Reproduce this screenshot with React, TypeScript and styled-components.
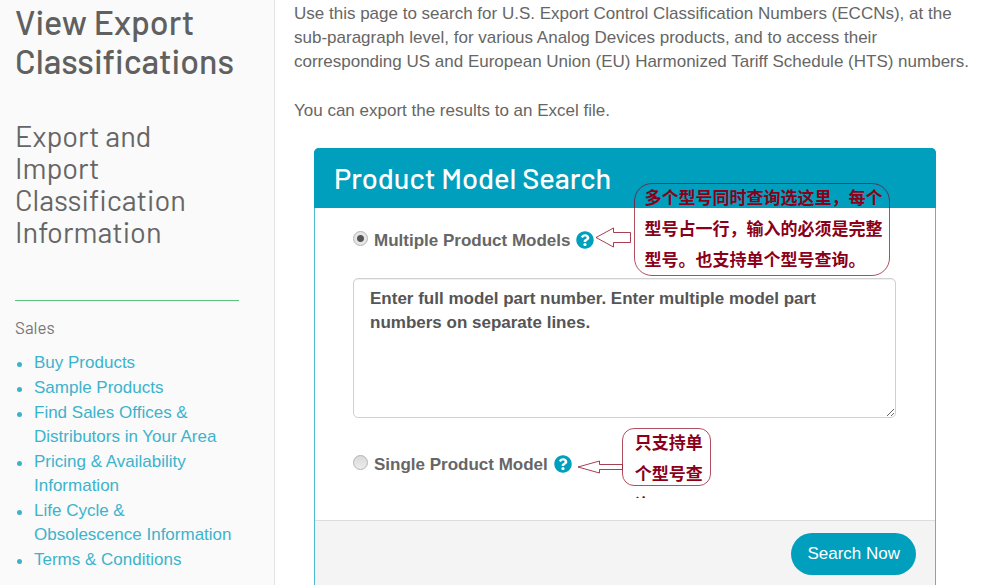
import React, { useState } from "react";
import styled, { createGlobalStyle, css } from "styled-components";
import { FaQuestionCircle } from "react-icons/fa";

const teal = "#009fbd";
const maroon = "#8b0018";
const sans = `"Liberation Sans", Arial, sans-serif`;
const display = `Barlow, Roboto, sans-serif`;

const GlobalStyle = createGlobalStyle`
  *, *::before, *::after { box-sizing: border-box; }
  body {
    margin: 0;
    background: #fff;
    color: #666;
    font: 17px/24px ${sans};
  }
`;

const Page = styled.div`
  display: flex;
  min-height: 100vh;
`;

const Sidebar = styled.aside`
  flex: none;
  width: 275px;
  padding: 2px 35px 12px 15px;
  background: #fafafa;
  border-right: 1px solid #e4e4e4;
`;

const Title = styled.h1`
  margin: 0;
  font: 500 34px/39px ${display};
  color: #606060;
`;

const Subtitle = styled.h2`
  margin: 40px 20px 0 0;
  font: 400 29px/32px ${display};
`;

const SalesNav = styled.nav`
  margin-top: 52px;
  padding-top: 14px;
  border-top: 1px solid #5cc27d;
`;

const NavHeading = styled.h3`
  margin: 0;
  font: 400 17px/24px ${display};
  color: #777;
`;

const LinkList = styled.ul`
  display: flex;
  flex-direction: column;
  gap: 1px;
  margin: 12px 4px 0 0;
  padding: 0 0 0 19px;
  list-style: none;
`;

const LinkItem = styled.li`
  position: relative;

  &::before {
    content: "";
    position: absolute;
    left: -17px;
    top: 11px;
    width: 5px;
    height: 5px;
    border-radius: 50%;
    background: #3cb3cc;
  }
`;

const NavLink = styled.a`
  color: #3cb3cc;
  text-decoration: none;

  &:hover {
    text-decoration: underline;
  }
`;

const Main = styled.main`
  flex: 1;
  min-width: 0;
  display: flex;
  flex-direction: column;
  padding: 2px 0 0 19px;
`;

const Intro = styled.p`
  margin: 0 0 25px;
`;

const Panel = styled.form`
  flex: 1;
  display: flex;
  flex-direction: column;
  margin: 0 45px 0 20px;
  border: 1px solid #4dbad0;
  border-bottom: 0;
  border-radius: 5px 5px 0 0;
`;

const PanelTitle = styled.h2`
  margin: -1px -1px 0;
  padding: 12px 20px;
  border-radius: 5px 5px 0 0;
  background: ${teal};
  color: #fff;
  font: 500 29px/36px ${display};
`;

const PanelBody = styled.div`
  display: flex;
  flex-direction: column;
  align-items: flex-start;
  padding: 21px 39px 43px 38px;
`;

const Choice = styled.div`
  position: relative;
  display: flex;
  align-items: center;
  gap: 6px;
`;

const ChoiceLabel = styled.label`
  display: flex;
  align-items: center;
  gap: 5px;
  font-weight: 700;
`;

const Radio = styled.input`
  appearance: none;
  flex: none;
  width: 15px;
  height: 15px;
  margin: 0 1px 5px 0;
  border: 1px solid #b4b4b4;
  border-radius: 50%;
  background: linear-gradient(#dadada, #ececec);

  &:checked {
    background: radial-gradient(circle, #555 0 3px, #e6e6e6 4px);
  }
`;

const HelpButton = styled.button`
  display: flex;
  padding: 0;
  margin-bottom: 2px;
  border: 0;
  background: none;
  color: ${teal};
  font-size: 18px;
  cursor: pointer;
`;

const Models = styled.textarea`
  display: block;
  width: 100%;
  height: 140px;
  margin: 25px 0 35px;
  padding: 8px 16px;
  border: 1px solid #d0d0d0;
  border-radius: 5px;
  box-shadow: inset 0 1px 1px #0001;
  background: #fff;
  font: 700 17px/24px ${sans};
  color: #555;
  resize: both;

  &::placeholder {
    color: #555;
    opacity: 1;
  }
`;

const PanelFooter = styled.footer`
  flex: 1;
  display: flex;
  justify-content: flex-end;
  align-items: flex-start;
  padding: 12px 19px 10px;
  border-top: 1px solid #ddd;
  background: #f4f4f4;
`;

const SearchButton = styled.button`
  height: 42px;
  padding: 0 16px;
  border: 0;
  border-radius: 21px;
  background: ${teal};
  color: #fff;
  font: 17px/24px ${sans};
  cursor: pointer;
`;

const noteSizes = {
  wide: css`
    left: calc(100% + 40px);
    top: -46px;
    width: 256px;
    height: 93px;
    padding-left: 9px;
    border-radius: 18px;
  `,
  narrow: css`
    left: calc(100% + 50px);
    top: -25px;
    width: 89px;
    height: 58px;
    padding-left: 12px;
    border-radius: 12px;
  `,
};

const Note = styled.aside<{ $size: keyof typeof noteSizes }>`
  position: absolute;
  z-index: 1;
  border: 1px solid ${maroon}b0;
  ${({ $size }) => noteSizes[$size]}
`;

const NoteText = styled.p<{ $width: number; $height: number }>`
  width: ${({ $width }) => $width}px;
  height: ${({ $height }) => $height}px;
  margin: -3px 0 0;
  overflow: hidden;
  color: ${maroon};
  font: 700 17px/31px "Noto Sans CJK SC", sans-serif;
  word-break: break-all;
`;

const Arrow = styled.svg<{ $drop: number; $reach: number }>`
  position: absolute;
  right: calc(100% + ${({ $reach }) => $reach}px);
  top: ${({ $drop }) => $drop}px;
  fill: #fff;
  stroke: ${maroon};
  stroke-opacity: 0.75;
`;

const links = [
  "Buy Products",
  "Sample Products",
  "Find Sales Offices & Distributors in Your Area",
  "Pricing & Availability Information",
  "Life Cycle & Obsolescence Information",
  "Terms & Conditions",
];

export default function App() {
  const [mode, setMode] = useState("multiple");
  const [models, setModels] = useState("");

  return (
    <>
      <GlobalStyle />
      <Page>
        <Sidebar>
          <Title>View Export Classifications</Title>
          <Subtitle>Export and Import Classification Information</Subtitle>
          <SalesNav>
            <NavHeading>Sales</NavHeading>
            <LinkList>
              {links.map((text) => (
                <LinkItem key={text}>
                  <NavLink href="#">{text}</NavLink>
                </LinkItem>
              ))}
            </LinkList>
          </SalesNav>
        </Sidebar>
        <Main>
          <Intro>
            Use this page to search for U.S. Export Control Classification Numbers (ECCNs), at the
            sub-paragraph level, for various Analog Devices products, and to access their
            corresponding US and European Union (EU) Harmonized Tariff Schedule (HTS) numbers.
          </Intro>
          <Intro>You can export the results to an Excel file.</Intro>
          <Panel onSubmit={(e) => e.preventDefault()}>
            <PanelTitle>Product Model Search</PanelTitle>
            <PanelBody>
              <Choice>
                <ChoiceLabel>
                  <Radio
                    type="radio"
                    name="mode"
                    checked={mode === "multiple"}
                    onChange={() => setMode("multiple")}
                  />
                  Multiple Product Models
                </ChoiceLabel>
                <HelpButton type="button" aria-label="Help with multiple product models">
                  <FaQuestionCircle />
                </HelpButton>
                <Note $size="wide">
                  <Arrow $reach={4} $drop={43} width="36" height="21" viewBox="0 0 36 21">
                    <path d="M1 10.5 L18.5 1 V5.5 H35.5 V15.5 H18.5 V20 Z" />
                  </Arrow>
                  <NoteText $width={240} $height={93}>
                    多个型号同时查询选这里，每个型号占一行，输入的必须是完整型号。也支持单个型号查询。
                  </NoteText>
                </Note>
              </Choice>
              <Models
                aria-label="Product models"
                placeholder="Enter full model part number. Enter multiple model part numbers on separate lines."
                value={models}
                onChange={(e) => setModels(e.target.value)}
              />
              <Choice>
                <ChoiceLabel>
                  <Radio
                    type="radio"
                    name="mode"
                    checked={mode === "single"}
                    onChange={() => setMode("single")}
                  />
                  Single Product Model
                </ChoiceLabel>
                <HelpButton type="button" aria-label="Help with single product model">
                  <FaQuestionCircle />
                </HelpButton>
                <Note $size="narrow">
                  <Arrow $reach={0} $drop={31} width="46" height="14" viewBox="0 0 46 14">
                    <path d="M1 7 L22.5 1 V4.5 H45.5 V9.5 H22.5 V13 Z" />
                  </Arrow>
                  <NoteText $width={70} $height={72}>
                    只支持单个型号查询
                  </NoteText>
                </Note>
              </Choice>
            </PanelBody>
            <PanelFooter>
              <SearchButton type="submit">Search Now</SearchButton>
            </PanelFooter>
          </Panel>
        </Main>
      </Page>
    </>
  );
}
